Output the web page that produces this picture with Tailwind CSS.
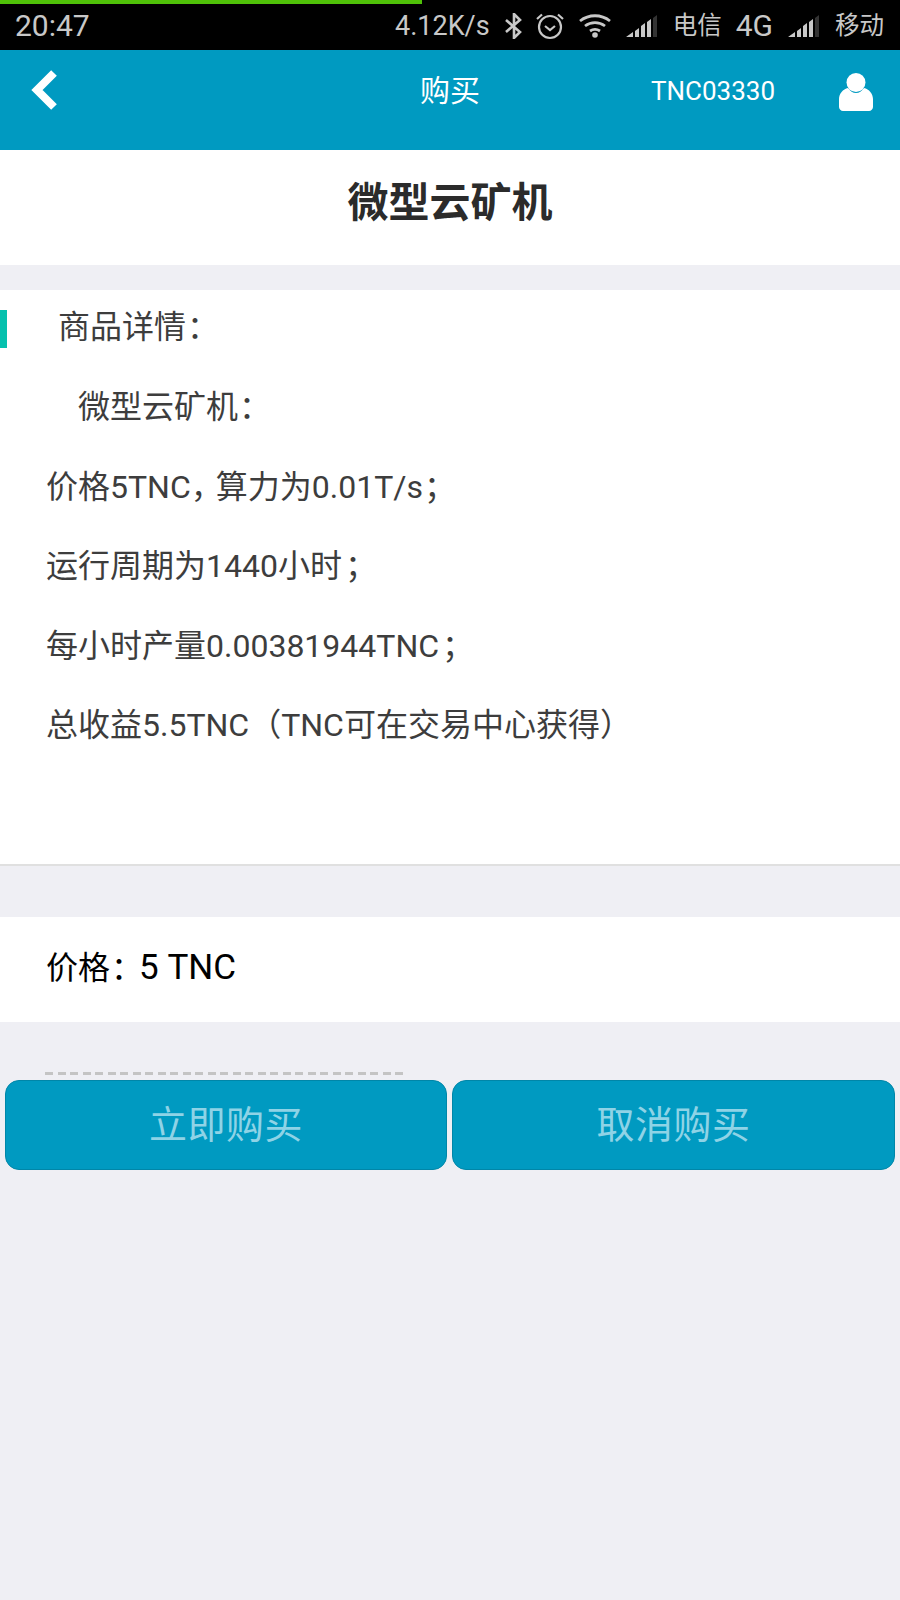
<!DOCTYPE html>
<html lang="zh-CN">
<head>
<meta charset="utf-8">
<script src="https://cdn.jsdelivr.net/npm/@tailwindcss/browser@4"></script>
</head>
<body class="m-0 bg-[#efeff4] font-['Roboto','Noto_Sans_CJK_SC',sans-serif]">
<div class="w-[900px] h-[1600px] bg-[#efeff4] overflow-hidden relative">
  <!-- status bar -->
  <div class="h-[50px] bg-black relative flex items-center text-[#c8c8c8] text-[27px] leading-none pt-[2px]">
    <div class="absolute left-0 top-0 h-[4px] w-[422px] bg-[#4fc108]"></div>
    <span class="ml-[15px] text-[30px]">20:47</span>
    <div class="ml-auto flex items-center mr-[16px]">
      <span class="mr-[15px] text-[27px]">4.12K/s</span>
      <svg width="18" height="26" viewBox="0 0 18 26" class="mr-[13px]" fill="none" stroke="#c8c8c8" stroke-width="2.6"><path d="M1 7l14 12-6 6V1l6 6L1 19"/></svg>
      <svg width="28" height="28" viewBox="0 0 28 28" class="mr-[15px]" fill="none" stroke="#c8c8c8" stroke-width="2.2"><circle cx="14" cy="15" r="11"/><path d="M9 14l5 4 5-4"/><path d="M1 7l5-4.500M27 7l-5-4.500"/></svg>
      <svg width="32" height="24" viewBox="0 0 32 24" class="mr-[15px]" fill="none" stroke="#c8c8c8" stroke-width="2.8"><path d="M1 7c9-7 21-7 30 0M6 12c6-4.500 14-4.500 20 0M11 17c3-2 7-2 10 0"/><circle cx="16" cy="21" r="2.800" fill="#c8c8c8" stroke="none"/></svg>
      <svg width="31" height="22" viewBox="0 0 31 22" class="mr-[16px]"><path d="M0 22l7-5v5zM9 16l4-3v9H9zM15 11l4-3v14h-4zM21 7l4-3v18h-4z" fill="#c8c8c8"/><path d="M27 3l4-3v22h-4z" fill="#333"/></svg>
      <span class="mr-[14px] text-[24.500px]">电信</span>
      <span class="mr-[15px] text-[30px]">4G</span>
      <svg width="31" height="22" viewBox="0 0 31 22" class="mr-[16px]"><path d="M0 22l7-5v5zM9 16l4-3v9H9zM15 11l4-3v14h-4zM21 7l4-3v18h-4z" fill="#c8c8c8"/><path d="M27 3l4-3v22h-4z" fill="#333"/></svg>
      <span class="text-[24.500px]">移动</span>
    </div>
  </div>
  <!-- header -->
  <div class="h-[100px] bg-[#009ac1] relative text-white">
    <div class="h-[80px] flex items-center justify-between">
      <svg width="28" height="40" viewBox="0 0 28 40" class="ml-[30px]"><path d="M24 3L7 20l17 17" fill="none" stroke="#fff" stroke-width="8" stroke-linejoin="miter"/></svg>
      <svg width="34" height="38" viewBox="0 0 34 38" class="mr-[27px] mt-[4px]" fill="#fff"><circle cx="17" cy="9.500" r="9.500"/><path d="M0 26c0-5 4-10 9-11 2 3 5 5 8 5s6-2 8-5c5 1 9 6 9 11v8c0 2-2 4-4 4H4c-2 0-4-2-4-4z"/></svg>
    </div>
    <span class="absolute left-0 right-0 top-[21px] text-center text-[30px] leading-[40px]">购买</span>
    <span class="absolute left-[651px] top-[21px] text-[26px] leading-[40px]">TNC03330</span>
  </div>
  <!-- title -->
  <div class="h-[115px] bg-white flex items-center justify-center text-[41px] font-bold text-[#2b2b2b] pb-[8px]">微型云矿机</div>
  <!-- details -->
  <div class="mt-[25px] h-[576px] bg-white relative border-b-2 border-[#e0e0e0] text-[32px] text-[#3d3d3d] leading-[40px]">
    <div class="absolute left-0 top-[20px] w-[7px] h-[38px] bg-[#06c1ae]"></div>
    <div class="pl-[58px] h-[80px] pt-[17px]">商品详情<span class="pl-[1px] tracking-[-1px]">：</span></div>
    <div class="pl-[78px] h-[79px] pt-[17px]">微型云矿机<span class="pl-[1px] tracking-[-1px]">：</span></div>
    <div class="pl-[46px] h-[79px] pt-[18px]">价格5TNC<span class="tracking-[-7px]">，</span>算力为0.01T/s<span class="pl-[1px]">；</span></div>
    <div class="pl-[46px] h-[80px] pt-[18px]">运行周期为1440小时<span class="pl-[3px]">；</span></div>
    <div class="pl-[46px] h-[79px] pt-[18px]">每小时产量0.00381944TNC<span class="pl-[3px]">；</span></div>
    <div class="pl-[46px] h-[79px] pt-[18px]">总收益5.5TNC（TNC可在交易中心获得）</div>
  </div>
  <!-- price -->
  <div class="mt-[51px] h-[105px] bg-white flex items-center pl-[46px] text-[32px] text-black pb-[2px]"><span>价格<span class="pl-[1px] tracking-[-4px]">：</span><span class="text-[35px]">5 TNC</span></span></div>
  <!-- dashed -->
  <div class="mt-[50px] ml-[45px] w-[361px] h-[3px] bg-[repeating-linear-gradient(90deg,#c4c4c4_0_8px,transparent_8px_12.500px)]"></div>
  <!-- buttons -->
  <div class="mt-[5px] flex gap-[5px] pl-[5px]">
    <button class="w-[442px] h-[90px] rounded-[14px] bg-[#009ac1] border border-[#0086a8] text-[38px] tracking-[0.5px] text-[#8fd3e6]">立即购买</button>
    <button class="w-[443px] h-[90px] rounded-[14px] bg-[#009ac1] border border-[#0086a8] text-[38px] tracking-[0.5px] text-[#8fd3e6]">取消购买</button>
  </div>
</div>
</body>
</html>
